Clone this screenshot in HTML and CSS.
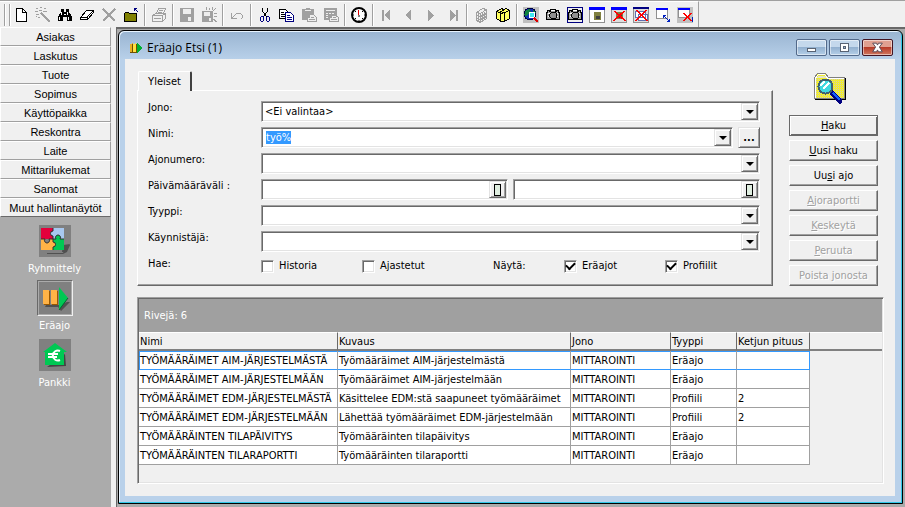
FILE: index.html
```html
<!DOCTYPE html>
<html lang="fi">
<head>
<meta charset="utf-8">
<title>Eräajo Etsi</title>
<link rel="stylesheet" href="styles.css">
</head>
<body>
<header class="toolbar">
  <div class="tools">
    <span class="grip"></span>
    <button class="tool" aria-label="Uusi"><svg viewBox="0 0 16 16"><path d="M3.500 1.500h6l4 4v9h-10z" fill="#fff" stroke="#000"/><path d="M9.500 1.500v4h4" fill="none" stroke="#000"/></svg></button>
    <button class="tool" aria-label="Taikasauva" disabled><svg viewBox="0 0 16 16"><path d="M6 6l9 9" stroke="#a0a0a0" stroke-width="2"/><path d="M1 1.500h2M5 .5h2M9 1.500h2M0 4.500h3M4 3.500h3M8 4.500h4M1 7.500h3M5 6.500h3M3 10.500h2M1 9.500h1" stroke="#a0a0a0"/></svg></button>
    <button class="tool" aria-label="Etsi"><svg viewBox="0 0 16 16"><path d="M4 2h3v3h2V2h3v3l2 3 1 2v4h-5v-4H6v4H1v-4l1-2 2-3z"/><path d="M4.500 5v3M2.500 10v3M10.500 5v3M11.500 10v3M7 7.500h2" stroke="#fff"/></svg></button>
    <button class="tool" aria-label="Tyhjennä"><svg viewBox="0 0 16 16"><path d="M7.500 3.500h7v2l-6 7h-7v-2z" fill="#fff" stroke="#000"/><path d="M1.500 10.500h6l7-7M8 10v3" fill="none" stroke="#000"/></svg></button>
    <button class="tool" aria-label="Poista" disabled><svg viewBox="0 0 16 16"><path d="M2 2l12 12M14 2L2 14" stroke="#a0a0a0" stroke-width="2"/></svg></button>
    <button class="tool" aria-label="Avaa kansio"><svg viewBox="0 0 16 16"><path d="M1.500 14.500v-8l1-1h3l1 1h7v8z" fill="#808000" stroke="#000"/><path d="M11.500 4V1.500H14M11.500 1.500l4 4" fill="none" stroke="#000080"/></svg></button>
    <span class="sep"></span>
    <button class="tool" aria-label="Tulosta" disabled><svg viewBox="0 0 16 16"><path d="M5.500 6.500l2-5h7l-2 5M1.500 8.500l3-2h10v5l-3 3h-10zM1.500 8.500h10v5M11.500 8.500l3-2M3 11.500h7M8 3.500h4M7 5.500h4" fill="none" stroke="#a0a0a0"/></svg></button>
    <span class="sep"></span>
    <button class="tool" aria-label="Tallenna" disabled><svg viewBox="0 0 16 16"><path d="M1 1h14v14H1z" fill="#a0a0a0"/><path d="M4 2h8v5H4zM9 10h3v4H9z" fill="#eee"/></svg></button>
    <button class="tool" aria-label="Tallenna kaikki" disabled><svg viewBox="0 0 16 16"><path d="M1 4h11v11H1z" fill="#a0a0a0"/><path d="M3 5h6v4H3zM8 11h2v3H8z" fill="#eee"/><path d="M5.500 0v3M8.500 1v2M11.500 0v3M14.500 1l-2 3M13 6.500h3M13 9.500h3M12.500 12l3 3" stroke="#a0a0a0"/></svg></button>
    <span class="sep"></span>
    <button class="tool" aria-label="Kumoa" disabled><svg viewBox="0 0 16 16"><path d="M2.500 6v5.500H8M2.500 11.500l5-5h4l2 2v2l-2 2" fill="none" stroke="#a0a0a0"/></svg></button>
    <span class="sep"></span>
    <button class="tool" aria-label="Leikkaa"><svg viewBox="0 0 16 16"><path d="M5.500 1v3l4 6M10.500 1v3l-4 6" fill="none" stroke="#000"/><path d="M6.500 9.500h-2l-1 1v3l1 1h1l1-1v-4M9.500 9.500h2l1 1v3l-1 1h-1l-1-1v-4" fill="none" stroke="#000080"/></svg></button>
    <button class="tool" aria-label="Kopioi"><svg viewBox="0 0 16 16"><path d="M.5 2.500h6l3 3v6h-9z" fill="#fff" stroke="#000"/><path d="M2 5.500h3M2 7.500h4M2 9.500h4" stroke="#000"/><path d="M6.500 5.500h5l3 3v6h-8z" fill="#fff" stroke="#000080"/><path d="M8 8.500h3M8 10.500h5M8 12.500h5" stroke="#000080"/></svg></button>
    <button class="tool" aria-label="Liitä" disabled><svg viewBox="0 0 16 16"><path d="M1 2h4V1h4v1h4v11H1z" fill="#a0a0a0"/><path d="M4 3.500h6" stroke="#eee"/><path d="M8.500 7.500h4l3 3v4h-9v-4h2z" fill="#eee" stroke="#a0a0a0"/><path d="M10 10.500h3M8 12.500h6" stroke="#a0a0a0"/></svg></button>
    <button class="tool" aria-label="Laskin" disabled><svg viewBox="0 0 16 16"><path d="M1 1h13v12H1z" fill="#a0a0a0"/><path d="M3 3.500h9M3 6.500h2M6 6.500h2M9 6.500h2M3 8.500h2M3 10.500h2" stroke="#eee"/><path d="M8.500 8.500h4l3 2v4h-9v-4h2z" fill="#eee" stroke="#a0a0a0"/><path d="M10 10.500h3M8 12.500h6" stroke="#a0a0a0"/></svg></button>
    <span class="sep"></span>
    <button class="tool" aria-label="Kello"><svg viewBox="0 0 16 16" class="smooth"><circle cx="8" cy="8" r="7" fill="#fff" stroke="#000" stroke-width="2"/><path d="M8 13v1M2 8h1M13 8h1M4 4l1 1M12 4l-1 1M4 12l1-1M12 12l-1-1M8 8v2" stroke="#000"/><path d="M7.500 3v5" stroke="#e00000"/></svg></button>
    <span class="sep"></span>
    <button class="tool" aria-label="Ensimmäinen" disabled><svg viewBox="0 0 16 16"><path d="M3 3h2v11H3zM11 3v11L5 8z" fill="#a0a0a0"/></svg></button>
    <button class="tool" aria-label="Edellinen" disabled><svg viewBox="0 0 16 16"><path d="M10 3v11L4 8z" fill="#a0a0a0"/></svg></button>
    <button class="tool" aria-label="Seuraava" disabled><svg viewBox="0 0 16 16"><path d="M5 3v11l6-6z" fill="#a0a0a0"/></svg></button>
    <button class="tool" aria-label="Viimeinen" disabled><svg viewBox="0 0 16 16"><path d="M11 3h2v11h-2zM5 3v11l6-6z" fill="#a0a0a0"/></svg></button>
    <span class="sep"></span>
    <button class="tool" aria-label="Kirja" disabled><svg viewBox="0 0 16 16"><path d="M3.500 5.500l6-4 4 1v9l-6 4-4-2zM3.500 5.500l4 1 6-4M7.500 7v8M5.500 6v8M9.500 6v8M11.500 5v8M3.500 8.500l4 1 6-3M3.500 11.500l4 1 6-3" fill="none" stroke="#a0a0a0"/></svg></button>
    <button class="tool" aria-label="Kirjat"><svg viewBox="0 0 16 16"><path d="M1.500 4.500l5-3 2 1 3-1 3 2v8l-5 3h-3l-2-1-3-2z" fill="#ffff60" stroke="#000"/><path d="M1.500 4.500l3 1 5-3M5.500 5v9M9.500 6v8M9.500 5.500l5-2M5.500 6.500l4-1" fill="none" stroke="#000"/></svg></button>
    <span class="sep"></span>
    <button class="tool" aria-label="Selaa"><svg viewBox="0 0 16 16"><path fill="#c0c0c0" d="M0 0h16v16H0z"/><circle cx="7" cy="7" r="6" fill="#1030b0" stroke="#000040"/><path d="M3 3l4-1 1 3-3 2-2 3-2-2zM10 2l3 4-3 1z" fill="#108040"/><circle cx="9" cy="8" r="3" fill="#40e8f0" stroke="#fff"/><path d="M11 11l4 4" stroke="#e00000" stroke-width="2"/></svg></button>
    <button class="tool" aria-label="Kuva"><svg viewBox="0 0 16 16"><path d="M1.500 5.500h1v-2h2v1h1v-2h5v2h1v-1h2v2h1v7h-13z" fill="#a0a0a0" stroke="#000"/><path d="M3 6.500h2M11 6.500h2M3 9.500h1M12 9.500h1M6 3.500h4" stroke="#fff"/><path d="M6 5h4l2 2v3l-2 2H6l-2-2V7z"/><path d="M6 6h4l1 1v3l-1 1H6l-1-1V7z" fill="#909090"/></svg></button>
    <button class="tool" aria-label="Kuva ikkunasta"><svg viewBox="0 0 16 16"><path d="M.5.500h15v15H.5z" fill="#eee" stroke="#000080"/><path d="M1.500 5.500h1v-2h2v1h1v-2h5v2h1v-1h2v2h1v7h-13z" fill="#a0a0a0" stroke="#000"/><path d="M3 6.500h2M11 6.500h2M3 9.500h1M12 9.500h1M6 3.500h4" stroke="#fff"/><path d="M6 5h4l2 2v3l-2 2H6l-2-2V7z"/><path d="M6 6h4l1 1v3l-1 1H6l-1-1V7z" fill="#909090"/></svg></button>
    <button class="tool" aria-label="Tallenna ikkuna"><svg viewBox="0 0 16 16"><path d="M.5.500h15v15H.5z" fill="#fff" stroke="#909090"/><path fill="#00f" d="M0 0h16v3H0z"/><path fill="#808040" d="M5 5h7v8H5z"/><path fill="#404040" d="M7 9h4v3H7z"/></svg></button>
    <button class="tool" aria-label="Poista ikkuna"><svg viewBox="0 0 16 16"><path d="M.5.500h15v15H.5z" fill="#ddd" stroke="#909090"/><path fill="#00f" d="M0 0h16v3H0z"/><path fill="#808040" d="M5 5h7v7H5z"/><path fill="#404040" d="M7 8h4v3H7z"/><path d="M3 4l11 10M14 4L3 14M4 4l11 10M13 4L2 14" stroke="#f00"/></svg></button>
    <button class="tool" aria-label="Poista kaikki ikkunat"><svg viewBox="0 0 16 16"><path d="M.5.500h15v15H.5z" fill="#ddd" stroke="#909090"/><path fill="#000080" d="M0 0h16v2H0z"/><path d="M2.500 4.500h10v6h-10zM5.500 7.500h9v6h-9z" fill="#fff" stroke="#6070b0"/><path d="M3 3l11 11M14 3L3 14M4 3l11 11M13 3L2 14" stroke="#f00"/></svg></button>
    <button class="tool" aria-label="Muuta kokoa"><svg viewBox="0 0 16 16"><path d="M1.500 1.500h11v10h-11z" fill="#fff" stroke="#909090"/><path fill="#00f" d="M1 1h12v2H1z"/><path d="M8.500 8.500l6 6M8.500 11V8.500H11M14.500 12v2.500H12" fill="none" stroke="#0020c0"/></svg></button>
    <button class="tool" aria-label="Poista koko"><svg viewBox="0 0 16 16"><path fill="#c0c0c0" d="M0 0h16v16H0z"/><path d="M1.500 1.500h11v9h-11z" fill="#fff" stroke="#909090"/><path fill="#00f" d="M1 1h12v2H1z"/><path d="M8 7l7 7M15.500 10v5" stroke="#0020c0"/><path d="M6 6l8 8M14 6l-8 8M7 6l8 8M15 6l-8 8" stroke="#f00"/></svg></button>
  </div>
</header>
<div class="desk">
  <nav class="sidebar">
    <button class="group-btn">Asiakas</button>
    <button class="group-btn">Laskutus</button>
    <button class="group-btn">Tuote</button>
    <button class="group-btn">Sopimus</button>
    <button class="group-btn">Käyttöpaikka</button>
    <button class="group-btn">Reskontra</button>
    <button class="group-btn">Laite</button>
    <button class="group-btn">Mittarilukemat</button>
    <button class="group-btn">Sanomat</button>
    <button class="group-btn">Muut hallintanäytöt</button>
    <div class="shortcuts">
      <button class="shortcut"><span class="tile"><svg viewBox="0 0 32 32" class="smooth"><path fill="#808080" d="M0 0h32v32H0z"/><path d="M8 28h16l3-8h4l-3 7-4 2H8z" fill="#505050"/><path d="M24 20l7-1-4 8h-4z" fill="#505050"/><path d="M2 3h12v3a2.500 2.500 0 1 0 0 5v3H2z" fill="#e4003c"/><path d="M14 3h11v11h-4a2.500 2.500 0 1 0-4 0h-3v-3a2.500 2.500 0 1 1 0-5z" fill="#a8c8f0"/><path d="M2 14h4a2.500 2.500 0 1 0 4 0h4v3a2.500 2.500 0 1 1 0 5v3H2z" fill="#ffb347"/><path d="M14 14h3a2.500 2.500 0 1 1 4 0h4v11H14v-3a2.500 2.500 0 1 0 0-5z" fill="#00c853"/><path d="M14 3v3a2.500 2.500 0 1 0 0 5v3M2 14h4a2.500 2.500 0 1 0 4 0h7a2.500 2.500 0 1 1 4 0h4M14 14v3a2.500 2.500 0 1 1 0 5v3" fill="none" stroke="#303030"/></svg></span>Ryhmittely</button>
      <button class="shortcut selected"><span class="tile"><svg viewBox="0 0 32 32" class="smooth"><path fill="#808080" d="M0 0h32v32H0z"/><path d="M7 23h13l8-3h3l-9 9-3-4H6z" fill="#505050"/><path d="M4 8h6v14H4zM12 8h6v14h-6z" fill="#ffb347"/><path d="M10.500 9v14M18.500 9v14M5 22.500h6M13 22.500h6" stroke="#9a5800"/><path d="M20 5l9 11-9 12z" fill="#00c853"/><path d="M20 28l9-12" stroke="#006830"/></svg></span>Eräajo</button>
      <button class="shortcut"><span class="tile"><svg viewBox="0 0 32 32" class="smooth"><path fill="#808080" d="M0 0h32v32H0z"/><path d="M8 28l18-13 1 12-19 1z" fill="#444"/><path d="M16 4L4 13h2v13h19V13h3z" fill="#00c853"/><path d="M21 12a5 5 0 1 0 0 9M9 15h10M9 18h9" fill="none" stroke="#fff" stroke-width="2"/></svg></span>Pankki</button>
    </div>
  </nav>
  <main class="workspace">
    <section class="window">
      <div class="titlebar">
        <svg class="app-icon" viewBox="0 0 14 14"><path d="M1 3l3-1v9H1z" fill="#e8b020"/><path d="M4 3l3-1v9H4z" fill="#ffe040"/><path d="M1 11h7v1H1zM7 3h1v9H7zM3 3h1v8H3z" fill="#705000"/><path d="M8 2l5 5-5 5z" fill="#00b030"/></svg>
        <h1>Eräajo Etsi (1)</h1>
        <button class="ctl" aria-label="Pienennä"><svg viewBox="0 0 30 15"><path d="M10.500 8.500h9v3h-9z" fill="#fff" stroke="#555f70"/></svg></button>
        <button class="ctl" aria-label="Suurenna"><svg viewBox="0 0 30 15"><path d="M10.500 3.500h9v8h-9z" fill="#fff" stroke="#555f70"/><path d="M13.500 6.500h3v2h-3z" fill="#9ab8d6" stroke="#555f70"/></svg></button>
        <button class="ctl close" aria-label="Sulje"><svg viewBox="0 0 30 15" class="smooth"><path d="M10 3h4l1 2 1-2h4l-3 4 3 5h-4l-1-2-1 2h-4l3-5z" fill="#fff" stroke="#574a55"/></svg></button>
      </div>
      <div class="client">
        <div class="upper">
          <form class="search">
            <button type="button" class="tab">Yleiset</button>
            <div class="panel">
              <div class="row"><label for="jono">Jono:</label>
                <div class="field"><select id="jono"><option>&lt;Ei valintaa&gt;</option></select><span class="drop"></span></div></div>
              <div class="row"><label for="nimi">Nimi:</label>
                <div class="field"><input id="nimi" type="text" value="työ%"><button type="button" class="drop" aria-label="Avaa luettelo"></button></div>
                <button type="button" class="more">...</button></div>
              <div class="row"><label for="ajo">Ajonumero:</label>
                <div class="field"><select id="ajo"><option></option></select><span class="drop"></span></div></div>
              <div class="row"><label for="alku">Päivämääräväli :</label>
                <div class="field"><input id="alku" type="text"><button type="button" class="pick" aria-label="Valitse alkupäivä"></button></div>
                <div class="field"><input type="text" aria-label="Loppupäivä"><button type="button" class="pick" aria-label="Valitse loppupäivä"></button></div></div>
              <div class="row"><label for="tyyppi">Tyyppi:</label>
                <div class="field"><select id="tyyppi"><option></option></select><span class="drop"></span></div></div>
              <div class="row"><label for="kayn">Käynnistäjä:</label>
                <div class="field"><select id="kayn"><option></option></select><span class="drop"></span></div></div>
              <div class="row options"><span class="caption">Hae:</span>
                <div class="checks">
                  <label><input type="checkbox">Historia</label>
                  <label><input type="checkbox">Ajastetut</label>
                  <span>Näytä:</span>
                  <label><input type="checkbox" checked>Eräajot</label>
                  <label><input type="checkbox" checked>Profiilit</label>
                </div></div>
            </div>
          </form>
          <aside class="actions">
            <svg class="folder" viewBox="0 0 34 34"><path d="M2 6h31v22H2z" fill="#000"/><path d="M1.500 26.500v-21l3-4h8l3 4h16v21z" fill="#f0ec30" stroke="#808080"/><path d="M3 7.500h28M3 9.500h28M3 11.500h28M3 13.500h28M3 15.500h28M3 17.500h28M3 19.500h28M3 21.500h28M3 23.500h28M3 25.500h28" stroke="#d0d0b0" stroke-dasharray="1 1"/><path d="M4 5.500l1-2h7l2 2z" fill="#e4e4c8"/><path d="M2.500 26V6l3-3.500h6l3 3.500H31" fill="none" stroke="#fff"/><path d="M19 21l8 8" stroke="#000080" stroke-width="5" stroke-linecap="round"/><path d="M20 21l7 7" stroke="#1060ff" stroke-width="2"/><circle cx="12.500" cy="14.500" r="7" fill="#40d8e0" stroke="#406070" stroke-width="2"/><path d="M8 14a5 5 0 0 1 4-4M10 17l6-6" fill="none" stroke="#fff" stroke-width="2"/></svg>
            <button class="default"><u>H</u>aku</button>
            <button><u>U</u>usi haku</button>
            <button>Uu<u>s</u>i ajo</button>
            <button disabled><u>A</u>joraportti</button>
            <button disabled><u>K</u>eskeytä</button>
            <button disabled><u>P</u>eruuta</button>
            <button disabled>Poista jonosta</button>
          </aside>
        </div>
        <div class="grid">
          <div class="count">Rivejä: 6</div>
          <table>
            <colgroup><col class="c-nimi"><col class="c-kuvaus"><col class="c-jono"><col class="c-tyyppi"><col class="c-ketju"><col></colgroup>
            <thead><tr><th>Nimi</th><th>Kuvaus</th><th>Jono</th><th>Tyyppi</th><th>Ketjun pituus</th><th></th></tr></thead>
            <tbody>
              <tr class="current"><td>TYÖMÄÄRÄIMET AIM-JÄRJESTELMÄSTÄ</td><td>Työmääräimet AIM-järjestelmästä</td><td>MITTAROINTI</td><td>Eräajo</td><td></td></tr>
              <tr><td>TYÖMÄÄRÄIMET AIM-JÄRJESTELMÄÄN</td><td>Työmääräimet AIM-järjestelmään</td><td>MITTAROINTI</td><td>Eräajo</td><td></td></tr>
              <tr><td>TYÖMÄÄRÄIMET EDM-JÄRJESTELMÄSTÄ</td><td>Käsittelee EDM:stä saapuneet työmääräimet</td><td>MITTAROINTI</td><td>Profiili</td><td>2</td></tr>
              <tr><td>TYÖMÄÄRÄIMET EDM-JÄRJESTELMÄÄN</td><td>Lähettää työmääräimet EDM-järjestelmään</td><td>MITTAROINTI</td><td>Profiili</td><td>2</td></tr>
              <tr><td>TYÖMÄÄRÄINTEN TILAPÄIVITYS</td><td>Työmääräinten tilapäivitys</td><td>MITTAROINTI</td><td>Eräajo</td><td></td></tr>
              <tr><td>TYÖMÄÄRÄINTEN TILARAPORTTI</td><td>Työmääräinten tilaraportti</td><td>MITTAROINTI</td><td>Eräajo</td><td></td></tr>
            </tbody>
          </table>
        </div>
      </div>
    </section>
  </main>
</div>
<script src="app.js"></script>
</body>
</html>
```
FILE: styles.css
```css
* { box-sizing: border-box; }
body {
  margin: 0;
  height: 100vh;
  display: flex;
  flex-direction: column;
  overflow: hidden;
  background: #ababab;
  color: #000;
  font: 11px/14px "DejaVu Sans Condensed", Tahoma, sans-serif;
}
button, input, select { font: inherit; color: inherit; margin: 0; padding: 0; border: 0; border-radius: 0; outline: 0; appearance: none; }
button { background: #f0f0f0; }
svg { display: block; shape-rendering: crispEdges; }
.smooth { shape-rendering: auto; }

/* Toolbar */
.toolbar { flex: none; height: 27px; background: #f0f0f0; border-top: 1px solid #a0a0a0; display: flex; }
.tools { display: flex; align-items: center; padding-right: 2px; border-right: 1px solid #a0a0a0; border-top: 1px solid #fff; }
.grip { width: 6px; height: 22px; margin: 0 0 0 4px; border: solid #a0a0a0; border-width: 0 1px; box-shadow: inset 1px 0 #fff, 1px 0 #fff; }
.tool { width: 22px; height: 22px; display: grid; place-items: center; background: none; }
.tool svg { width: 16px; height: 16px; }
.sep { width: 6px; height: 22px; }
.sep::before { content: ""; display: block; width: 2px; height: 100%; margin-left: 2px; background: linear-gradient(90deg, #a0a0a0 50%, #fff 50%); }

/* Sidebar */
.desk { flex: 1; min-height: 0; display: flex; }
.sidebar { flex: none; width: 116px; display: flex; flex-direction: column; background: linear-gradient(90deg, #ababab 111px, #f0f0f0 111px); }
.group-btn { width: 111px; height: 19px; flex: none; font: 11px/14px "Liberation Sans", sans-serif; border: 1px solid; border-color: #fff #a0a0a0 #a0a0a0 #fff; }
.group-btn:nth-of-type(10) { border-bottom-color: #696969; }
.shortcuts { width: 109px; padding-top: 6px; display: flex; flex-direction: column; align-items: center; }
.shortcut { height: 57px; background: none; color: #fff; display: flex; flex-direction: column; align-items: center; gap: 3px; }
.tile { padding: 2px; }
.tile svg { width: 32px; height: 32px; }
.selected .tile { padding: 1px; border: 1px solid; border-color: #696969 #f0f0f0 #f0f0f0 #696969; }

/* Window */
.workspace { flex: 1; min-width: 0; padding: 1px 2px 3px 1px; background: #ababab; border: solid #696969; border-width: 2px 0 0 1px; display: flex; }
.window { flex: 1; min-width: 0; display: flex; flex-direction: column; border: 1px solid #000; border-radius: 6px 6px 0 0; padding: 0 7px 7px 6px; background: linear-gradient(#99b4d1, #b9d1ea 29px); box-shadow: inset -1px -1px #30c8e8, inset 1px 1px #e8f4ff; }
.titlebar { flex: none; height: 28px; display: flex; align-items: center; gap: 2px; padding: 5px 2px 0 4px; }
.app-icon { width: 14px; height: 14px; }
h1 { flex: 1; margin: 0 0 0 2px; font: 12px/16px "Open Sans", "Segoe UI", sans-serif; }
.ctl { width: 31px; height: 17px; border: 1px solid #52698a; border-radius: 2px; background: linear-gradient(#c4d8ec 50%, #93b1d0 50%, #b5cfe8); box-shadow: inset 0 0 0 1px #ffffff80; }
.ctl svg { width: 29px; height: 15px; }
.close { border-color: #431422; background: linear-gradient(#e0a090 50%, #b83c28 50%, #d07860); }
.client { flex: 1; min-height: 0; background: #f0f0f0; padding: 12px 11px 12px 12px; display: flex; flex-direction: column; gap: 11px; }
.upper { display: flex; gap: 16px; padding-right: 6px; }

/* Search form */
.search { flex: 1; min-width: 0; display: flex; flex-direction: column; align-items: stretch; }
.tab { align-self: flex-start; width: 54px; height: 20px; margin: 0 0 -1px 1px; z-index: 1; border: 1px solid #fff; border-right: 2px solid #404040; border-bottom: 0; border-radius: 2px 2px 0 0; }
.panel { flex: 1; padding: 10px 12px 0 10px; border: 1px solid; border-color: #fff #696969 #696969 #fff; box-shadow: inset -1px -1px #a0a0a0; }
.row { display: flex; gap: 5px; height: 21px; margin-bottom: 5px; }
.row > label, .caption { flex: none; width: 108px; margin-top: -2px; line-height: 18px; }
.options { height: 18px; margin-bottom: 7px; }
.field { flex: 1; min-width: 0; display: flex; padding: 1px; background: #fff; border: 1px solid; border-color: #a0a0a0 #fff #fff #a0a0a0; box-shadow: inset 1px 1px #696969, inset -1px -1px #e3e3e3; }
.field input, .field select { flex: 1; min-width: 0; width: 0; height: 100%; background: none; padding-left: 3px; }
.field select { padding-left: 2px; }
::selection { background: #3399ff; color: #fff; }
.drop, .pick, .more { flex: none; background: #f0f0f0; display: grid; place-items: center; border: 1px solid; border-color: #e3e3e3 #696969 #696969 #e3e3e3; box-shadow: inset 1px 1px #fff, inset -1px -1px #a0a0a0; }
.drop, .pick { width: 17px; height: 17px; }
.drop::before { content: ""; border: 4px solid transparent; border-top-color: #000; border-bottom: 0; }
.pick::before { content: ""; width: 5px; height: 10px; border: 1px solid #000; background: #dfeee0; }
.more { width: 22px; font-weight: bold; }
.checks { flex: 1; display: grid; grid-template-columns: 101px 131px 71px 101px 1fr; align-items: center; }
.checks label { display: flex; align-items: center; gap: 5px; }
.checks input { width: 13px; height: 13px; background: #fff; border: 1px solid; border-color: #a0a0a0 #fff #fff #a0a0a0; box-shadow: inset 1px 1px #696969, inset -1px -1px #e3e3e3; display: grid; place-items: center; }
.checks input:checked::before { content: ""; width: 7px; height: 4px; border: solid #000; border-width: 0 0 2px 2px; rotate: -45deg; translate: 0 -1px; }

/* Action buttons */
.actions { flex: none; width: 89px; display: flex; flex-direction: column; gap: 4px; }
.actions .folder { width: 34px; height: 34px; margin: 1px auto 5px 24px; }
.actions button { height: 21px; border: 1px solid; border-color: #fff #696969 #696969 #fff; box-shadow: inset -1px -1px #a0a0a0; }
.actions .default { border-color: #696969; box-shadow: inset 1px 1px #fff, inset -1px -1px #696969; }
.actions button:disabled { color: #a0a0a0; text-shadow: 1px 1px #fff; }

/* Result table */
.grid { flex: 1; min-height: 0; padding: 1px; border: 1px solid; border-color: #a0a0a0 #fff #fff #a0a0a0; box-shadow: inset 1px 1px #696969, inset -1px -1px #e3e3e3; overflow: hidden; }
.count { height: 33px; padding: 10px 5px; background: #a0a0a0; color: #fff; }
table { width: 100%; table-layout: fixed; border-collapse: separate; border-spacing: 0; }
th, td { padding: 2px 0 0 1px; height: 19px; text-align: left; font-weight: normal; white-space: nowrap; }
th { border-right: 1px solid #696969; border-bottom: 2px solid #808080; border-top: 1px solid #fff; }
th:last-child { border-right: 0; }
td { background: #fff; border-right: 1px solid #a0a0a0; border-bottom: 1px solid #a0a0a0; }
.current td { border-bottom-color: #3399ff; box-shadow: inset 0 1px #3399ff; }
.current td:first-child { box-shadow: inset 1px 1px #3399ff; }
.current td:last-child { border-right-color: #3399ff; }
.c-nimi { width: 199px; }
.c-kuvaus { width: 233px; }
.c-jono { width: 100px; }
.c-tyyppi { width: 66px; }
.c-ketju { width: 73px; }
```
FILE: app.js
```js
const nameField = document.getElementById("nimi");
nameField.focus();
nameField.select();
```
